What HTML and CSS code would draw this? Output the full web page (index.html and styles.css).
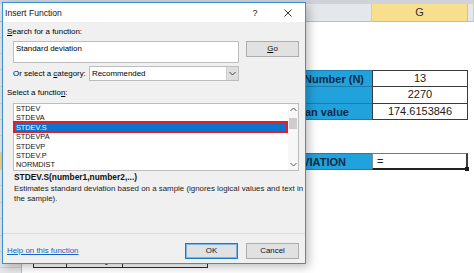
FILE: index.html
```html
<!DOCTYPE html>
<html>
<head>
<meta charset="utf-8">
<link rel="stylesheet" href="styles.css">
</head>
<body>
<div class="sheet">
  <div class="topbar"></div>
  <div class="row colhead">
    <div class="ch"></div>
    <div class="ch"></div>
    <div class="ch"></div>
    <div class="ch"></div>
    <div class="ch"></div>
    <div class="ch"></div>
    <div class="ch"></div>
    <div class="ch active">G</div>
    <div class="ch"></div>
  </div>
  <div class="row"><div class="rh"></div></div>
  <div class="row"><div class="rh"></div></div>
  <div class="row"><div class="rh"></div></div>
  <div class="row tall"><div class="rh"></div><div class="blue c-f first pr8"><span>Total Number (N)</span></div><div class="val c-g first">13</div></div>
  <div class="row tall"><div class="rh"></div><div class="blue c-f"></div><div class="val c-g">2270</div></div>
  <div class="row"><div class="rh"></div><div class="blue c-f pr23"><span>Mean value</span></div><div class="val c-g">174.6153846</div></div>
  <div class="row"><div class="rh"></div></div>
  <div class="row tall"><div class="rh"></div></div>
  <div class="row tall"><div class="rh active"></div><div class="blue c-f single pr26"><span>STANDARD DEVIATION</span></div><div class="sel c-g">=<span class="handle"></span></div></div>
  <div class="row"><div class="rh"></div></div>
  <div class="row tall"><div class="rh"></div></div>
  <div class="row"><div class="rh"></div></div>
  <div class="row tall"><div class="rh"></div></div>
  <div class="row"><div class="rh"></div></div>
  <div class="row"><div class="rh">15</div><div class="tcell c-b">12</div><div class="tcell c-c">Ronny</div><div class="tcell c-d">270</div></div>
  <div class="row"><div class="rh"></div></div>
</div>

<div class="dialog">
  <div class="titlebar">
    <span class="title">Insert Function</span>
    <span class="tb-help">?</span>
    <span class="tb-close"><svg width="8" height="8" viewBox="0 0 8 8"><path d="M0.5 0.5 L7.5 7.5 M7.5 0.5 L0.5 7.5" stroke="#222" stroke-width="0.9" fill="none"/></svg></span>
  </div>
  <div class="dbody">
    <div class="lbl"><u>S</u>earch for a function:</div>
    <div class="search-row">
      <div class="search-box">Standard deviation</div>
      <div class="btn go"><u>G</u>o</div>
    </div>
    <div class="cat-row">
      <span class="cat-lbl">Or select a <u>c</u>ategory:</span>
      <div class="select">
        <span class="sel-text">Recommended</span>
        <span class="sel-arrow"><svg width="7" height="5" viewBox="0 0 7 5"><path d="M0.5 1 L3.5 4 L6.5 1" stroke="#444" stroke-width="1" fill="none"/></svg></span>
      </div>
    </div>
    <div class="lbl fn-lbl">Select a functio<u>n</u>:</div>
    <div class="listbox">
      <ul class="items">
        <li>STDEV</li>
        <li>STDEVA</li>
        <li class="selected">STDEV.S</li>
        <li>STDEVPA</li>
        <li>STDEVP</li>
        <li>STDEV.P</li>
        <li>NORMDIST</li>
      </ul>
      <div class="scrollbar">
        <span class="arr"><svg width="7" height="5" viewBox="0 0 7 5"><path d="M0.5 4 L3.5 1 L6.5 4" stroke="#555" stroke-width="1" fill="none"/></svg></span>
        <span class="thumb"></span>
        <span class="track"></span>
        <span class="arr"><svg width="7" height="5" viewBox="0 0 7 5"><path d="M0.5 1 L3.5 4 L6.5 1" stroke="#555" stroke-width="1" fill="none"/></svg></span>
      </div>
    </div>
    <div class="sig">STDEV.S(number1,number2,...)</div>
    <div class="desc">Estimates standard deviation based on a sample (ignores logical values and text in the sample).</div>
    <div class="footer">
      <a class="help">Help on this function</a>
      <div class="btn default">OK</div>
      <div class="btn">Cancel</div>
    </div>
  </div>
</div>
</body>
</html>
```
FILE: styles.css
```css
* { box-sizing: border-box; }
html, body { margin: 0; padding: 0; }
body {
  width: 474px;
  height: 273px;
  overflow: hidden;
  position: relative;
  background: #ffffff;
  font-family: "Liberation Sans", Arial, sans-serif;
}

/* ---------- spreadsheet ---------- */
.sheet { display: flex; flex-direction: column; }
.topbar { height: 4px; background: #cfd3d9; }
.row {
  display: grid;
  grid-template-columns: 22px 11px 33px 56px 86px 20px 144px 96px 1fr;
  height: 16px;
}
.row.tall { height: 17px; }
.colhead {
  height: 18px;
  background: #e4e7eb;
  border-bottom: 1px solid #b9bec5;
}
.ch {
  border-right: 1px solid #c8ccd2;
  font-size: 11px;
  color: #333;
  text-align: center;
  line-height: 17px;
}
.ch.active {
  background: #f8df8e;
  border-bottom: 1px solid #e5b954;
  border-right: 1px solid #e0c070;
}
.rh {
  grid-column: 1;
  background: #e6e7e9;
  border-right: 1px solid #b5b9bf;
  border-bottom: 1px solid #cfd2d6;
  font-size: 10px;
  color: #333;
  text-align: center;
  line-height: 15px;
}
.rh.active { background: #f5d47c; }

.c-b { grid-column: 3; }
.c-c { grid-column: 4; }
.c-d { grid-column: 5; }
.c-f { grid-column: 7; }
.c-g { grid-column: 8; }

.blue {
  background: #22a2dd;
  color: #0f2a45;
  font-weight: bold;
  font-size: 11px;
  white-space: nowrap;
  border-bottom: 1px solid #1d7eae;
  display: flex;
  justify-content: flex-end;
  align-items: center;
}
.blue span { flex: none; }
.blue.first { border-top: 1px solid #1d7eae; }
.blue.single { border-top: 1px solid #1d7eae; }
.pr8 { padding-right: 8px; }
.pr23 { padding-right: 23px; }
.pr26 { padding-right: 26px; }

.val {
  border: 1px solid #3a3a3a;
  border-top: none;
  font-size: 11px;
  color: #1a1a1a;
  text-align: center;
  line-height: 15px;
}
.val.first { border-top: 1px solid #3a3a3a; }

.sel {
  position: relative;
  border-top: 1px solid #777;
  border-right: 2px solid #3c3c3c;
  border-bottom: 2px solid #222;
  border-left: 1px solid #888;
  font-size: 11px;
  color: #222;
  padding-left: 4px;
  line-height: 14px;
}
.handle {
  position: absolute;
  right: -3px;
  bottom: -3px;
  width: 4px;
  height: 4px;
  background: #1a1a1a;
}

.tcell {
  border-left: 1px solid #2d2d2d;
  border-bottom: 1px solid #2d2d2d;
  font-size: 11px;
  color: #222;
  text-align: center;
  line-height: 15px;
}
.tcell.c-d { border-right: 1px solid #2d2d2d; }

/* ---------- dialog ---------- */
.dialog {
  position: absolute;
  left: 2px;
  top: 2px;
  width: 304px;
  height: 262px;
  border: 1px solid #3d8fd5;
  background: #f0f0f0;
  box-shadow: 3px 3px 9px rgba(0, 0, 0, 0.25);
  display: flex;
  flex-direction: column;
  font-size: 7.9px;
  color: #000;
}
.titlebar {
  flex: none;
  height: 19px;
  background: #ffffff;
  display: flex;
  align-items: center;
  padding-left: 2px;
}
.title { flex: 1; font-size: 8.6px; color: #111; }
.tb-help {
  width: 12px;
  margin-right: 20px;
  text-align: center;
  font-size: 9px;
  color: #222;
}
.tb-close {
  width: 14px;
  margin-right: 10px;
  display: flex;
  justify-content: center;
  align-items: center;
}

.dbody {
  flex: 1;
  display: flex;
  flex-direction: column;
  padding: 5px 6px 0 4px;
}
.lbl { line-height: 10px; height: 10px; }
.search-row { display: flex; margin-top: 4px; margin-left: 6px; }
.search-box {
  width: 226px;
  height: 22px;
  background: #fff;
  border: 1px solid #bdbdbd;
  padding: 2px 0 0 2px;
  line-height: 10px;
}
.btn {
  width: 53px;
  height: 16px;
  background: #e1e1e1;
  border: 1px solid #adadad;
  text-align: center;
  line-height: 14px;
  color: #111;
}
.go { margin-left: 7px; }

.cat-row {
  display: flex;
  align-items: center;
  margin-top: 3px;
  margin-left: 6px;
  height: 15px;
}
.cat-lbl { width: 76px; white-space: nowrap; }
.select {
  width: 150px;
  height: 15px;
  background: #fff;
  border: 1px solid #bdbdbd;
  display: flex;
  align-items: center;
  padding-left: 2px;
}
.sel-text { flex: 1; }
.sel-arrow {
  width: 12px;
  height: 13px;
  background: #dedede;
  border-left: 1px solid #cfcfcf;
  display: flex;
  align-items: center;
  justify-content: center;
}

.fn-lbl { margin-top: 7px; }
.listbox {
  margin-top: 5px;
  margin-left: 6px;
  width: 286px;
  height: 68px;
  background: #fff;
  border: 1px solid #bdbdbd;
  display: flex;
}
.items {
  list-style: none;
  margin: 0;
  padding: 0;
  flex: 1;
}
.items li {
  height: 9.4px;
  line-height: 9.4px;
  padding-left: 2px;
  font-size: 7.3px;
  color: #111;
}
.items li.selected {
  position: relative;
  background: #0a74cf;
  color: #fff;
}
.items li.selected::after {
  content: "";
  position: absolute;
  left: -1px;
  right: 0;
  top: -2px;
  bottom: -1px;
  border: 2px solid #e31e2a;
}
.scrollbar {
  width: 10px;
  background: #f7f7f7;
  display: flex;
  flex-direction: column;
  align-items: center;
}
.arr {
  height: 11px;
  display: flex;
  align-items: center;
  justify-content: center;
}
.thumb {
  width: 8px;
  height: 11px;
  margin-top: 3px;
  background: #cdcdcd;
}
.track { flex: 1; }

.sig {
  margin-top: 1px;
  margin-left: 7px;
  line-height: 10px;
  font-weight: bold;
  font-size: 8.4px;
  color: #111;
}
.desc {
  margin-top: 2px;
  margin-left: 7px;
  width: 292px;
  line-height: 10px;
  color: #222;
}
.footer {
  margin: auto -6px 0 -4px;
  border-top: 1px solid #dcdcdc;
  padding: 9px 6px 4px 4px;
  display: flex;
  align-items: center;
}
.help {
  margin-right: auto;
  color: #1a62c6;
  text-decoration: underline;
  line-height: 10px;
}
.btn.default {
  border-color: #1b7ad2;
  box-shadow: inset 0 0 0 1px #7ab4e8;
  margin-right: 8px;
}
```
